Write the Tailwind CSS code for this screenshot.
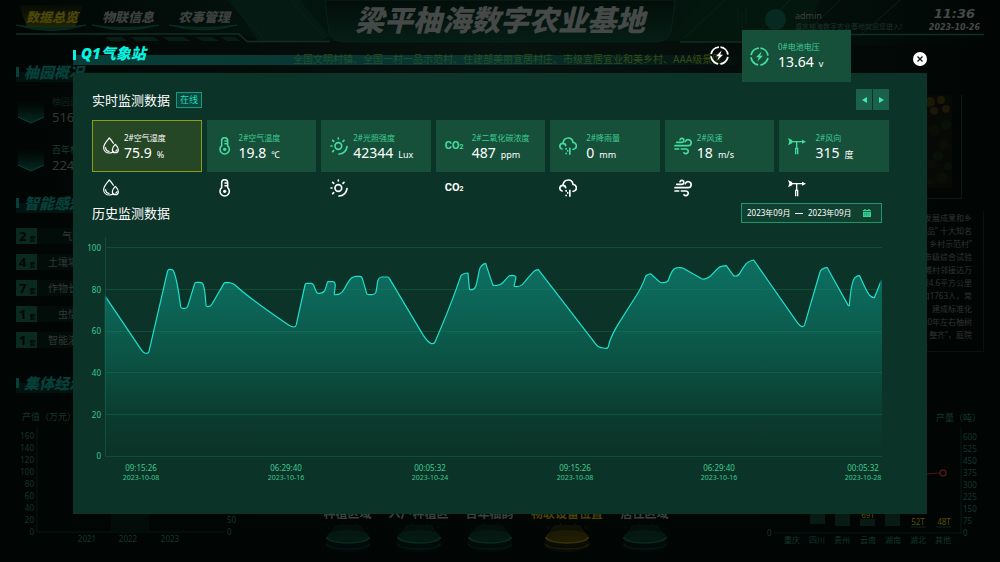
<!DOCTYPE html>
<html lang="zh-CN">
<head>
<meta charset="utf-8">
<meta name="viewport" content="width=device-width, initial-scale=1">
<title>梁平柚海数字农业基地</title>
<script src="https://cdn.jsdelivr.net/npm/@tailwindcss/browser@4"></script>
</head>
<body class="bg-[#010605] font-['Noto_Sans','Noto_Sans_CJK_SC',sans-serif] text-white">

<!-- Icon set -->
<svg class="hidden" aria-hidden="true">
  <symbol id="i-drop" viewBox="0 0 54 54"><g fill="none" stroke="currentColor" stroke-width="3.6" stroke-linecap="round" stroke-linejoin="round"><path d="M37 19C34 13 30 8 25 3C18 11 8 21 8 32C8 42 16 48 25 48C31 48 34 47 37 44"/><path d="M43 22C38 28 34 32 34 38C34 44 38 47 43 47C48 47 52 44 52 38C52 32 48 28 43 22Z"/><path d="M14 32C14 38 18 42 24 43"/><path d="M44 42Q47 42 48 38"/></g></symbol>
  <symbol id="i-thermo" viewBox="0 0 54 54"><g fill="none" stroke="currentColor" stroke-width="4.6" stroke-linecap="round"><path d="M17 26V11A9 9 0 0 1 35 11V26A14 14 0 1 1 17 26Z"/><path d="M27 12H34M27 20H34"/></g><circle cx="26" cy="37" r="5" fill="currentColor"/></symbol>
  <symbol id="i-sun" viewBox="0 0 54 54"><g fill="none" stroke="currentColor" stroke-width="5" stroke-linecap="round"><circle cx="25" cy="27" r="10"/><path d="M3 27H6M8 10L11 13M25 3V6M39 13L42 10M11 41L8 44M51 29A24 24 0 0 1 27 51"/></g></symbol>
  <symbol id="i-rain" viewBox="0 0 54 54"><g fill="none" stroke="currentColor" stroke-width="5" stroke-linecap="round"><path d="M9 36C-1 32 1 19 12 19C13 8 20 3 28 3C36 3 41 9 42 16C53 17 55 30 48 35Q45 37 42 37"/><path d="M12 19Q19 19 20 26"/></g><path d="M19 33H24V38H19ZM19 47H24V52H19ZM24 39H28V44H24ZM30 32H35V53H30Z" fill="currentColor"/></symbol>
  <symbol id="i-wind" viewBox="0 0 54 54"><g fill="none" stroke="currentColor" stroke-width="5" stroke-linecap="round"><path d="M8 16H24A6 6 0 1 0 18 8"/><path d="M3 26H42A9 9 0 1 0 34 14"/><path d="M3 36H14M22 36H36A7 7 0 1 1 30 47"/></g></symbol>
  <symbol id="i-vane" viewBox="0 0 54 54"><g fill="none" stroke="currentColor" stroke-width="4"><path d="M8 14H46M26 14V34"/><path d="M23 52V34H29V52"/></g><path d="M0 3L12 9L14 14L12 19L0 25L4 14ZM42 8L54 14L42 20Z" fill="currentColor"/></symbol>
  <symbol id="i-bolt" viewBox="0 0 54 54"><path d="M27 3A24 24 0 1 1 26.9 3" pathLength="40" fill="none" stroke="currentColor" stroke-width="5" stroke-dasharray="8.4 1.6" stroke-dashoffset="-0.8"/><path d="M33 13L17 29H25L21 41L37 25H29Z" fill="currentColor"/></symbol>
  <symbol id="pedestal" viewBox="0 0 60 40"><ellipse cx="30" cy="22" rx="17" ry="8" fill="currentColor" opacity=".15"/><path d="M15 14A15 7 0 0 0 45 14L39 3H21Z" fill="currentColor" opacity=".25"/><ellipse cx="30" cy="14" rx="15" ry="6" fill="currentColor" opacity=".3"/><path d="M15 15A15 6 0 0 0 45 15" fill="none" stroke="currentColor" stroke-width="1.6"/><path d="M15 22A15 5 0 0 0 45 22M16 6h1M43 6h1M25 2h1M35 2h1" fill="none" stroke="currentColor" stroke-width=".8" opacity=".6"/></symbol>
</svg>

<div class="relative min-h-screen overflow-hidden">

  <!-- Dimmed dashboard -->
  <div class="flex min-h-screen flex-col bg-[radial-gradient(ellipse_at_50%_10%,#07130e_0%,#030a07_45%,#010504_75%)] text-[#333836]">
    <header class="relative h-[45px]">
      <svg class="absolute inset-0 h-full w-full" viewBox="0 0 1000 45" preserveAspectRatio="none" aria-hidden="true">
        <defs>
          <linearGradient id="hb" x1="0" x2="1"><stop offset="0" stop-color="#010504"/><stop offset=".3" stop-color="#04140e"/><stop offset=".5" stop-color="#04110c"/><stop offset=".72" stop-color="#04150f"/><stop offset="1" stop-color="#010504"/></linearGradient>
          <linearGradient id="hc" x1="0" x2="0" y1="0" y2="1"><stop offset="0" stop-color="#030d09"/><stop offset="1" stop-color="#051e15"/></linearGradient>
          <linearGradient id="ty" x1="0" x2="0" y1="0" y2="1"><stop offset="0" stop-color="#1a1c02" stop-opacity=".2"/><stop offset="1" stop-color="#232405"/></linearGradient>
        </defs>
        <path d="M0 0H1000V45H760L740 41H260L240 34H0Z" fill="url(#hb)"/>
        <path d="M230 0H300L330 36L320 41H258Z" fill="#051a13"/>
        <path d="M700 0H820L800 41H668Z" fill="#04170f"/>
        <g stroke="#09231a" stroke-width="1"><path d="M228 0L262 36M290 0L325 38M725 0L684 38M790 0L752 38M840 0L800 38M900 0L860 36"/><path d="M252 8V22M256 6V28M260 9V26M264 5V30M268 12V32M738 8V26M742 12V30M746 6V24" opacity=".6"/></g>
        <path d="M325 0H675L671 32Q668 42 655 42H345Q332 42 329 32Z" fill="url(#hc)" stroke="#082219"/>
        <path d="M16 34H239L247 41.500H330M680 42H748L757 34.500H984" fill="none" stroke="#102f25" stroke-width="1.500"/>
        <path d="M105 37H122L127 41H110ZM130 37H153L160 41H137ZM162 37H184L191 41H169ZM195 37H212L219 41H202ZM220 37H235L240 41H227Z" fill="#071e16"/>
        <path d="M19 5H83L75 27H27Z" fill="url(#ty)"/>
        <g fill="#06231a" stroke="#0b3024" stroke-width=".8"><path d="M16 25Q51 36 86 25Q51 30 16 25Z"/><path d="M92 25Q125 35 159 25Q125 30 92 25Z"/><path d="M169 25Q203 35 237 25Q203 30 169 25Z"/></g>
      </svg>
      <div class="relative flex h-[34px] items-start justify-between">
        <nav class="flex gap-6 pt-[9px] pl-[26px] text-[13px] leading-4 font-black italic">
          <a href="#" class="text-[#4b4709]">数据总览</a>
          <a href="#" class="text-[#3c413f]">物联信息</a>
          <a href="#" class="text-[#3c413f]">农事管理</a>
        </nav>
        <div class="flex gap-[27px] pr-5">
          <div class="flex gap-[6px] pt-[9px]">
            <div class="h-[21px] w-[21px] rounded-full bg-[#072a20]"></div>
            <div class="pl-[3px] whitespace-nowrap"><p class="text-[9px] leading-[14px] text-[#3c413f]">admin</p><p class="text-[7px] leading-[8px] text-[#1d3229]">重庆柚海数字农业基地欢迎您进入!</p></div>
          </div>
          <div class="text-center font-['DejaVu_Sans','Noto_Sans',sans-serif] font-bold italic text-[#454947]"><p class="pt-[6px] text-[13px] leading-4">11:36</p><p class="text-[8px] leading-[11px]">2023-10-26</p></div>
        </div>
      </div>
      <h1 class="absolute inset-x-0 top-1 text-center text-[29px] leading-8 font-black text-[#454947] italic">梁平柚海数字农业基地</h1>
    </header>

    <div class="grid flex-1 grid-cols-[240px_1fr_240px]">
      <!-- Left column -->
      <aside class="whitespace-nowrap">
        <h2 class="mx-4 mt-[17px] flex h-5 items-center gap-[5px] bg-linear-to-b from-transparent from-50% to-[#02130f] to-50% text-[15px] font-black text-[#07403b] italic"><span class="h-[10px] w-[3px] bg-[#07403b]"></span>柚园概况</h2>
        <dl class="flex flex-col gap-[18px] pt-[13px] pl-[18px]">
          <div class="flex h-[30px] gap-2">
            <svg class="h-[30px] w-[26px]" viewBox="0 0 26 30" aria-hidden="true"><defs><linearGradient id="cup" x1="0" x2="0" y1="0" y2="1"><stop offset="0" stop-color="#031a15" stop-opacity="0"/><stop offset="1" stop-color="#052c24"/></linearGradient></defs><path d="M0 6H26V22L13 28L0 22Z" fill="url(#cup)"/><path d="M0 22L13 28L26 22" fill="none" stroke="#0a4436"/></svg>
            <div><dt class="text-[9px] leading-[14px] text-[#10231c]">柚园面积</dt><dd class="text-[13px] leading-4">5160</dd></div>
          </div>
          <div class="flex h-[30px] gap-2">
            <svg class="h-[30px] w-[26px]" viewBox="0 0 26 30" aria-hidden="true"><path d="M0 6H26V22L13 28L0 22Z" fill="url(#cup)"/><path d="M0 22L13 28L26 22" fill="none" stroke="#0a4436"/></svg>
            <div><dt class="text-[9px] leading-[14px] text-[#1b3a2e]">百年柚树</dt><dd class="text-[13px] leading-4">2240</dd></div>
          </div>
        </dl>
        <h2 class="mx-4 mt-5 flex h-5 items-center gap-[5px] bg-linear-to-b from-transparent from-50% to-[#02130f] to-50% text-[15px] font-black text-[#07403b] italic"><span class="h-[10px] w-[3px] bg-[#07403b]"></span>智能感知</h2>
        <ul class="mt-[15px] flex flex-col gap-[10px] pl-4 text-[10px] leading-4">
          <li class="flex h-4 bg-[#020d0a]"><b class="w-[21px] bg-[#0a2a1f] pl-[3px] text-[13px] text-[#010605]">2<small class="pl-[3px] text-[6px]">套</small></b><span class="w-[80px] text-center">气象站</span></li>
          <li class="flex h-4 bg-[#020d0a]"><b class="w-[21px] bg-[#0a2a1f] pl-[3px] text-[13px] text-[#010605]">4<small class="pl-[3px] text-[6px]">套</small></b><span class="w-[62px] text-center">土壤墒情</span></li>
          <li class="flex h-4 bg-[#020d0a]"><b class="w-[21px] bg-[#0a2a1f] pl-[3px] text-[13px] text-[#010605]">7<small class="pl-[3px] text-[6px]">套</small></b><span class="w-[62px] text-center">作物长势</span></li>
          <li class="flex h-4 bg-[#020d0a]"><b class="w-[21px] bg-[#0a2a1f] pl-[3px] text-[13px] text-[#010605]">1<small class="pl-[3px] text-[6px]">套</small></b><span class="w-[62px] text-center">虫情</span></li>
          <li class="flex h-4 bg-[#020d0a]"><b class="w-[21px] bg-[#0a2a1f] pl-[3px] text-[13px] text-[#010605]">1<small class="pl-[3px] text-[6px]">套</small></b><span class="w-[62px] text-center">智能灌溉</span></li>
        </ul>
        <h2 class="mx-4 mt-[25px] flex h-5 items-center gap-[5px] bg-linear-to-b from-transparent from-50% to-[#02130f] to-50% text-[15px] font-black text-[#07403b] italic"><span class="h-[10px] w-[3px] bg-[#07403b]"></span>集体经济</h2>
        <svg class="mt-3 w-full" viewBox="0 0 240 145" font-size="8" fill="#15372c" role="img" aria-label="产值统计">
          <text x="22" y="15" font-size="9">产值（万元）</text>
          <path d="M37 22V127H224" fill="none" stroke="#071a14"/>
          <rect x="111" y="100" width="38" height="27" fill="#020d0a"/>
          <g text-anchor="end"><text x="34" y="34">160</text><text x="34" y="46">140</text><text x="34" y="58">120</text><text x="34" y="70">100</text><text x="34" y="82">80</text><text x="34" y="94">60</text><text x="34" y="106">40</text><text x="34" y="118">20</text><text x="34" y="130">0</text></g>
          <g text-anchor="middle"><text x="87" y="137">2021</text><text x="128" y="137">2022</text><text x="170" y="137">2023</text></g>
          <text x="227" y="118">50</text><text x="227" y="130">0</text>
        </svg>
      </aside>

      <!-- Map area -->
      <section class="flex flex-col justify-between">
        <p class="mt-[6px] ml-[53px] text-[10px] leading-4 whitespace-nowrap text-[#3a4b0a]">全国文明村镇、全国一村一品示范村、住建部美丽宜居村庄、市级宜居宜业和美乡村、AAA级景区</p>
        <div class="flex justify-center pr-[8px] text-[12px] leading-4 font-bold whitespace-nowrap text-[#0a2a20]">
          <div class="flex w-[71px] flex-col items-center"><span class="text-[#3c413f]">种植区域</span><svg class="h-[40px] w-[84px]" aria-hidden="true" viewBox="0 0 60 40" preserveAspectRatio="none"><use href="#pedestal"/></svg></div>
          <div class="flex w-[71px] flex-col items-center"><span class="text-[#3c413f]">入户种植区</span><svg class="h-[40px] w-[84px]" aria-hidden="true" viewBox="0 0 60 40" preserveAspectRatio="none"><use href="#pedestal"/></svg></div>
          <div class="flex w-[71px] flex-col items-center"><span class="text-[#3c413f]">百年柚韵</span><svg class="h-[40px] w-[84px]" aria-hidden="true" viewBox="0 0 60 40" preserveAspectRatio="none"><use href="#pedestal"/></svg></div>
          <div class="flex w-[84px] flex-col items-center text-[#3a3108]"><span class="text-[#4b4109]">物联设备位置</span><svg class="h-[40px] w-[84px]" aria-hidden="true" viewBox="0 0 60 40" preserveAspectRatio="none"><use href="#pedestal"/></svg></div>
          <div class="flex w-[71px] flex-col items-center"><span class="text-[#3c413f]">居住区域</span><svg class="h-[40px] w-[84px]" aria-hidden="true" viewBox="0 0 60 40" preserveAspectRatio="none"><use href="#pedestal"/></svg></div>
        </div>
      </section>

      <!-- Right column -->
      <aside class="whitespace-nowrap">
        <div class="mt-[50px] mr-[38px] flex h-[104px] justify-end border-r border-b border-[#0a1a14] pr-[9px] pb-[10px]">
          <svg class="h-full w-[60px]" viewBox="0 0 60 94" preserveAspectRatio="none" aria-hidden="true"><rect width="60" height="94" fill="#060905"/><g fill="#1c1806"><circle cx="38" cy="7" r="5"/><circle cx="49" cy="5" r="4"/><circle cx="54" cy="14" r="4"/><circle cx="42" cy="16" r="4"/></g><g fill="#0b0e07"><circle cx="42" cy="36" r="6"/><circle cx="52" cy="50" r="5"/><circle cx="40" cy="70" r="5"/><circle cx="50" cy="84" r="6"/><circle cx="38" cy="88" r="3"/></g><g fill="#081108"><circle cx="54" cy="30" r="5"/><circle cx="46" cy="62" r="5"/><circle cx="56" cy="72" r="4"/></g></svg>
        </div>
        <div class="mt-3 mr-4 border-r border-b border-[#07130f] pr-[11px] pb-[10px] text-right text-[8px] leading-[13px] text-[#2f3432]">
          <p>发展成果和乡</p><p>品” 十大知名</p><p>乡村示范村”</p><p>市级综合试验</p><p>滩村邻接达万</p><p>积4.6平方公里</p><p>口1763人，常</p><p>建成标准化</p><p>50年左右柚树</p><p>整齐”，庭院</p>
        </div>
        <svg class="mt-[54px] w-full" viewBox="0 0 240 145" font-size="8" fill="#15372c" role="img" aria-label="产量统计">
          <text x="176" y="15" font-size="9">产量（吨）</text>
          <path d="M201 22V127H14" fill="none" stroke="#071a14"/>
          <g><text x="203" y="34">600</text><text x="203" y="46">525</text><text x="203" y="58">450</text><text x="203" y="70">375</text><text x="203" y="82">300</text><text x="203" y="94">225</text><text x="203" y="106">150</text><text x="203" y="118">75</text><text x="203" y="130">0</text></g>
          <text x="7" y="130">0</text>
          <path d="M150 69L180 67" stroke="#4b1717" fill="none"/><circle cx="183" cy="67" r="3" stroke="#4b1717" stroke-width="1.500" fill="none"/>
          <g fill="#071a14"><rect x="50" y="100" width="15" height="18"/><rect x="75" y="100" width="15" height="20"/><rect x="100" y="113" width="15" height="7"/><rect x="125" y="100" width="15" height="20"/></g>
          <g fill="#5a4f09" text-anchor="middle"><text x="108" y="112">69T</text><text x="158" y="119">52T</text><text x="184" y="119">48T</text></g>
          <path d="M151 121H166M176 121H191" stroke="#0c261d"/>
          <g text-anchor="middle"><text x="32" y="137">重庆</text><text x="57" y="137">四川</text><text x="82" y="137">贵州</text><text x="108" y="137">云南</text><text x="133" y="137">湖南</text><text x="158" y="137">湖北</text><text x="183" y="137">其他</text></g>
        </svg>
      </aside>
    </div>
  </div>

  <!-- Station dialog -->
  <div role="dialog" aria-labelledby="dlg-title" class="absolute inset-x-[73px] top-[30px]">
    <div class="relative flex h-[43px] items-start">
      <div class="absolute inset-x-0 top-[25px] h-[10px] bg-linear-to-r from-[#0a5550]/70 via-[#0a5550]/50 via-50% to-transparent to-80%"></div>
      <h2 id="dlg-title" class="relative mt-[13px] flex items-center gap-[5px] text-[15px] leading-5 font-black text-[#08f4e2] italic"><span class="mt-1 h-[10px] w-[3px] bg-[#08f4e2]"></span>Q1气象站</h2>
      <svg class="relative mt-4 mr-[184px] ml-auto h-[19px] w-[19px]" aria-hidden="true"><use href="#i-bolt"/></svg>
      <button type="button" aria-label="关闭" class="mt-[22px] h-[14px] w-[14px]"><svg class="h-full w-full" viewBox="0 0 14 14"><circle cx="7" cy="7" r="7" fill="#fff"/><path d="M4.500 4.500L9.500 9.500M9.500 4.500L4.500 9.500" stroke="#0b1f18" stroke-width="1.400"/></svg></button>
      <!-- Battery card floats over the panel edge -->
      <div class="absolute top-0 right-[76px] z-10 flex h-[52px] w-[109px] items-center gap-[9px] bg-[#17503a] pl-2">
        <svg class="h-[19px] w-[19px] text-[#45dca0]" aria-hidden="true"><use href="#i-bolt"/></svg>
        <div class="pt-[2px]"><p class="text-[8px] leading-3 text-[#3fca93]">0#电池电压</p><p class="flex items-baseline gap-[5px] text-sm leading-[18px]">13.64<span class="text-[9px]">v</span></p></div>
      </div>
    </div>

    <div class="bg-[#0b3327] pt-4 pr-[38px] pb-6 pl-[19px]">
      <div class="flex h-[21px] items-center justify-between">
        <div class="flex items-center gap-[6px]"><h3 class="text-[13px] leading-5">实时监测数据</h3><span class="border border-[#129c88] bg-[#0c4638] px-[3px] text-[9px] leading-[14px] text-[#1fdcc4]">在线</span></div>
        <div class="flex gap-px">
          <button type="button" aria-label="上一页" class="grid h-[21px] w-4 place-items-center bg-[#1a604a]"><svg class="h-[6px] w-[5px]" viewBox="0 0 5 6"><path d="M5 0V6L0 3Z" fill="#45e8ae"/></svg></button>
          <button type="button" aria-label="下一页" class="grid h-[21px] w-4 place-items-center bg-[#1a604a]"><svg class="h-[6px] w-[5px]" viewBox="0 0 5 6"><path d="M0 0V6L5 3Z" fill="#45e8ae"/></svg></button>
        </div>
      </div>

      <div class="mt-[10px] grid grid-cols-7 gap-[5px] whitespace-nowrap text-[#45dca0]">
        <div class="flex h-[52px] items-center gap-[5px] bg-[#264726] pl-[9px] text-white outline outline-[#8b9c1c] -outline-offset-1">
          <svg class="h-[18px] w-[18px]" aria-hidden="true"><use href="#i-drop"/></svg>
          <div class="pt-[4px]"><p class="text-[8px] leading-3">2#空气湿度</p><p class="flex items-baseline gap-[5px] text-sm leading-[18px]">75.9<span class="text-[9px]">%</span></p></div>
        </div>
        <div class="flex h-[52px] items-center gap-[5px] bg-[#17503a] pl-[9px]">
          <svg class="h-[18px] w-[18px]" aria-hidden="true"><use href="#i-thermo"/></svg>
          <div class="pt-[4px]"><p class="text-[8px] leading-3 text-[#3fca93]">2#空气温度</p><p class="flex items-baseline gap-[5px] text-sm leading-[18px] text-white">19.8<span class="text-[9px]">℃</span></p></div>
        </div>
        <div class="flex h-[52px] items-center gap-[5px] bg-[#17503a] pl-[9px]">
          <svg class="h-[18px] w-[18px]" aria-hidden="true"><use href="#i-sun"/></svg>
          <div class="pt-[4px]"><p class="text-[8px] leading-3 text-[#3fca93]">2#光照强度</p><p class="flex items-baseline gap-[5px] text-sm leading-[18px] text-white">42344<span class="text-[9px]">Lux</span></p></div>
        </div>
        <div class="flex h-[52px] items-center gap-[9px] bg-[#17503a] pl-[9px]">
          <span class="w-[18px] font-['Liberation_Sans_Narrow','Roboto',sans-serif] text-[11px] leading-[18px] font-bold">CO<span class="text-[7px]">2</span></span>
          <div class="pt-[4px]"><p class="text-[8px] leading-3 text-[#3fca93]">2#二氧化碳浓度</p><p class="flex items-baseline gap-[5px] text-sm leading-[18px] text-white">487<span class="text-[9px]">ppm</span></p></div>
        </div>
        <div class="flex h-[52px] items-center gap-[9px] bg-[#17503a] pl-[9px]">
          <svg class="h-[18px] w-[18px]" aria-hidden="true"><use href="#i-rain"/></svg>
          <div class="pt-[4px]"><p class="text-[8px] leading-3 text-[#3fca93]">2#降雨量</p><p class="flex items-baseline gap-[5px] text-sm leading-[18px] text-white">0<span class="text-[9px]">mm</span></p></div>
        </div>
        <div class="flex h-[52px] items-center gap-[5px] bg-[#17503a] pl-[9px]">
          <svg class="h-[18px] w-[18px]" aria-hidden="true"><use href="#i-wind"/></svg>
          <div class="pt-[4px]"><p class="text-[8px] leading-3 text-[#3fca93]">2#风速</p><p class="flex items-baseline gap-[5px] text-sm leading-[18px] text-white">18<span class="text-[9px]">m/s</span></p></div>
        </div>
        <div class="flex h-[52px] items-center gap-[9px] bg-[#17503a] pl-[9px]">
          <svg class="h-[18px] w-[18px]" aria-hidden="true"><use href="#i-vane"/></svg>
          <div class="pt-[4px]"><p class="text-[8px] leading-3 text-[#3fca93]">2#风向</p><p class="flex items-baseline gap-[5px] text-sm leading-[18px] text-white">315<span class="text-[9px]">度</span></p></div>
        </div>
      </div>

      <div class="mt-[7px] grid h-[18px] grid-cols-7 gap-[5px]">
        <div class="pl-[9px]"><svg class="h-[18px] w-[18px]" aria-hidden="true"><use href="#i-drop"/></svg></div>
        <div class="pl-[9px]"><svg class="h-[18px] w-[18px]" aria-hidden="true"><use href="#i-thermo"/></svg></div>
        <div class="pl-[9px]"><svg class="h-[18px] w-[18px]" aria-hidden="true"><use href="#i-sun"/></svg></div>
        <div class="pl-[9px] font-['Liberation_Sans_Narrow','Roboto',sans-serif] text-[11px] leading-[18px] font-bold">CO<span class="text-[7px]">2</span></div>
        <div class="pl-[9px]"><svg class="h-[18px] w-[18px]" aria-hidden="true"><use href="#i-rain"/></svg></div>
        <div class="pl-[9px]"><svg class="h-[18px] w-[18px]" aria-hidden="true"><use href="#i-wind"/></svg></div>
        <div class="pl-[9px]"><svg class="h-[18px] w-[18px]" aria-hidden="true"><use href="#i-vane"/></svg></div>
      </div>

      <div class="mt-[5px] flex items-center justify-between pr-[7px]">
        <h3 class="text-[13px] leading-[22px]">历史监测数据</h3>
        <div class="flex h-5 w-[141px] items-center border border-[#23936b] bg-[#10402f] pl-[5px] text-[8px]">
          <input type="text" aria-label="开始月份" value="2023年09月" class="w-[45px] bg-transparent outline-none">
          <span class="mx-[3px] h-px w-2 bg-white"></span>
          <input type="text" aria-label="结束月份" value="2023年09月" class="ml-[2px] w-[45px] bg-transparent outline-none">
          <button type="button" aria-label="选择日期" class="ml-[10px] h-2 w-2"><svg class="h-full w-full" viewBox="0 0 24 24"><path d="M0 3H4V0H8V3H16V0H20V3H24V7H0ZM0 9H24V24H0Z" fill="#35d196"/><path d="M4 13H20M4 18H20" stroke="#10402f" stroke-width="1.500" stroke-dasharray="3 2"/></svg></button>
        </div>
      </div>

      <svg class="mt-[10px] -ml-[9px] block w-[calc(100%+9px)]" viewBox="-9 0 806 256" font-size="8" fill="#3fca93" role="img" aria-label="历史监测数据折线图">
        <defs>
          <linearGradient id="area" gradientUnits="userSpaceOnUse" x1="0" y1="90" x2="0" y2="679"><stop offset="0" stop-color="#0d6f60"/><stop offset=".2" stop-color="#0c6658"/><stop offset=".57" stop-color="#0b4e3f"/><stop offset=".8" stop-color="#0b3b2e"/><stop offset="1" stop-color="#0b3327"/></linearGradient>
          <clipPath id="plot"><rect x="49" y="60" width="2322" height="540"/></clipPath>
          <path id="curve" d="M44 196L50 205L153 358C158 367 163 370 169 370Q176 370 177 364L233 122Q235 118 239 118C247 118 249 119 252 127C263 155 268 200 272 230Q273 235 279 235H284Q291 235 293 229L314 161Q315 157 319 157H330Q337 157 339 163C346 180 346 205 348 226Q349 230 353 230C361 230 363 228 366 222L402 160Q404 157 410 157C424 158 428 159 435 165C480 207 560 260 597 286C604 291 608 291 612 291Q617 291 619 284L645 165Q646 160 651 160H664Q669 161 671 166Q677 182 680 187Q682 190 688 190C704 190 706 180 712 157Q713 154 717 155H728C740 156 735 170 733 190Q732 195 738 194C765 194 765 160 785 144Q790 140 797 139H810Q815 139 817 145L830 190Q831 194 836 194H845C862 193 858 182 863 154Q866 142 876 141H893Q896 141 898 145L1000 316Q1012 334 1022 340Q1030 343 1034 338Q1085 220 1112 139Q1114 134 1120 132Q1128 129 1134 129L1138 175Q1138 180 1143 179C1158 179 1158 170 1168 120Q1171 105 1187 100L1200 140L1209 166H1220C1238 166 1240 153 1258 137Q1260 136 1266 136C1282 137 1278 142 1276 152L1272 168Q1273 170 1280 170Q1290 170 1297 164C1310 150 1320 135 1332 124Q1338 120 1345 119L1518 343Q1524 352 1540 354Q1552 358 1555 350Q1560 325 1580 290L1640 195Q1655 172 1667 139Q1670 134 1676 133Q1682 130 1686 135L1708 155Q1712 159 1718 158Q1732 158 1735 151Q1742 128 1752 117Q1760 113 1765 113Q1774 112 1780 115L1835 146Q1841 149 1850 145Q1862 140 1872 127Q1885 113 1892 110Q1902 107 1909 107L1930 136Q1932 139 1937 138C1950 138 1948 128 1964 107Q1972 94 1991 90L2120 275Q2130 290 2138 290Q2142 290 2144 284L2190 126Q2191 122 2196 118Q2203 113 2211 112L2275 227H2278Q2284 150 2296 142Q2302 136 2309 137Q2325 175 2338 195Q2345 203 2353 203L2376 146V679H44Z"/>
        </defs>
        <g transform="translate(-2 -4) scale(.33333)"><use href="#curve" fill="url(#area)" /></g>
        <path d="M14 13.500H790M14 55.500H790M14 97.500H790M14 138.500H790M14 180.500H790M13.500 3V222.500H790" fill="none" stroke="#1a8a63" stroke-opacity=".3"/>
        <g transform="translate(-2 -4) scale(.33333)" clip-path="url(#plot)"><use href="#curve" fill="none" stroke="#1fe0cd" stroke-width="3.600" stroke-linejoin="round"/></g>
        <g text-anchor="end"><text x="9" y="17">100</text><text x="9" y="59">80</text><text x="9" y="100">60</text><text x="9" y="142">40</text><text x="9" y="184">20</text><text x="9" y="225">0</text></g>
        <g text-anchor="middle"><text x="49" y="237">09:15:26</text><text x="194" y="237">06:29:40</text><text x="338" y="237">00:05:32</text><text x="483" y="237">09:15:26</text><text x="627" y="237">06:29:40</text><text x="771" y="237">00:05:32</text></g>
        <g text-anchor="middle" font-size="7"><text x="49" y="246">2023-10-08</text><text x="194" y="246">2023-10-16</text><text x="338" y="246">2023-10-24</text><text x="483" y="246">2023-10-08</text><text x="627" y="246">2023-10-16</text><text x="771" y="246">2023-10-28</text></g>
      </svg>
    </div>
  </div>
</div>
</body>
</html>
